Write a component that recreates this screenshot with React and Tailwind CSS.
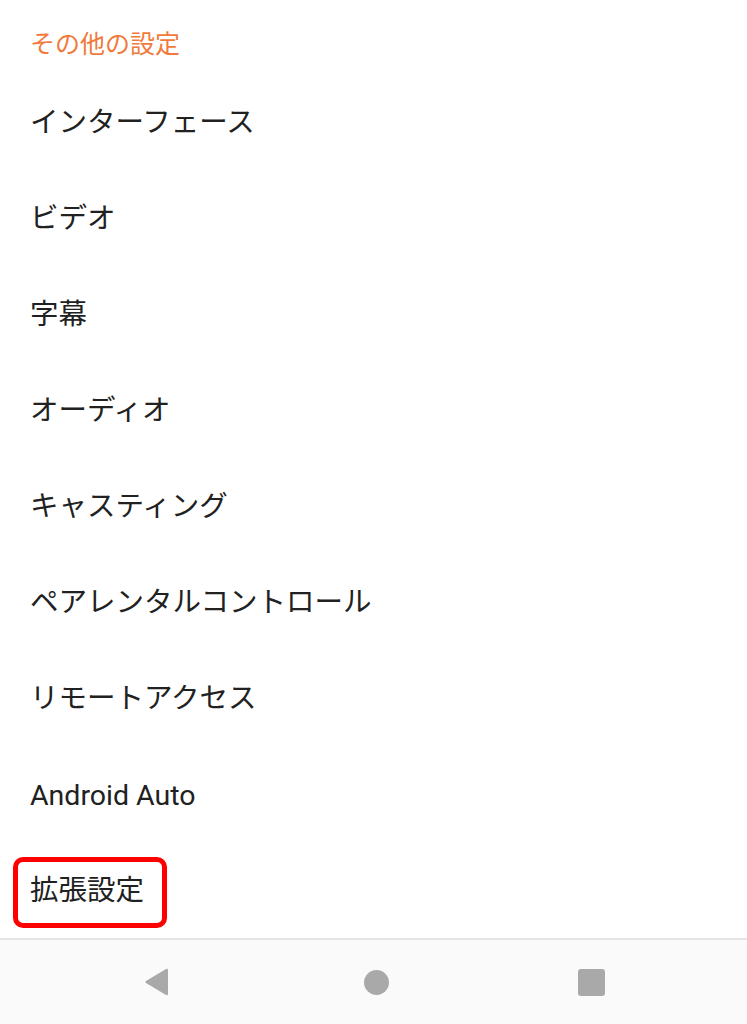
export default function App() {
  const items = [
    "インターフェース",
    "ビデオ",
    "字幕",
    "オーディオ",
    "キャスティング",
    "ペアレンタルコントロール",
    "リモートアクセス",
  ];
  const font = { fontFamily: '"Noto Sans CJK JP", "Noto Sans", sans-serif' };
  return (
    <div className="w-[747px] h-[1024px] bg-white flex flex-col overflow-hidden" style={font}>
      <div className="pt-[25px] pb-[15px] pl-[30px] text-[25px] leading-[34px] text-[#f07a3c]">
        その他の設定
      </div>
      {items.map((t) => (
        <div key={t} className="h-[96px] flex items-center pl-[30px] pb-[3px] text-[28.5px] text-[#212121]">
          {t}
        </div>
      ))}
      <div className="h-[96px] flex items-center pl-[30px] pt-[5px] text-[28.5px] text-[#212121] font-['Roboto',sans-serif]">
        Android Auto
      </div>
      <div className="relative h-[96px] flex items-center pl-[30px] pb-[3px] text-[28.5px] text-[#212121]">
        拡張設定
        <div className="absolute left-[13px] top-[15px] w-[154px] h-[71px] border-[5px] border-[#ff0000] rounded-[10px]"></div>
      </div>
      <div className="h-[2px] bg-[#e4e4e4]"></div>
      <div className="flex-1 bg-[#fafafa] flex items-center">
        <div className="w-[318px] flex justify-center">
          <svg width="26" height="28" viewBox="0 0 26 28" className="translate-x-[-2px]">
            <path d="M24 2 L24 26 Q24 28 22 27 L2 15 Q0.5 14 2 13 L22 1 Q24 0 24 2 Z" fill="#a9a9a9" />
          </svg>
        </div>
        <div className="w-[118px] flex justify-center">
          <div className="w-[25px] h-[25px] rounded-full bg-[#a9a9a9]"></div>
        </div>
        <div className="w-[312px] flex justify-center">
          <div className="w-[27px] h-[27px] rounded-[3px] bg-[#a9a9a9]"></div>
        </div>
      </div>
    </div>
  );
}
